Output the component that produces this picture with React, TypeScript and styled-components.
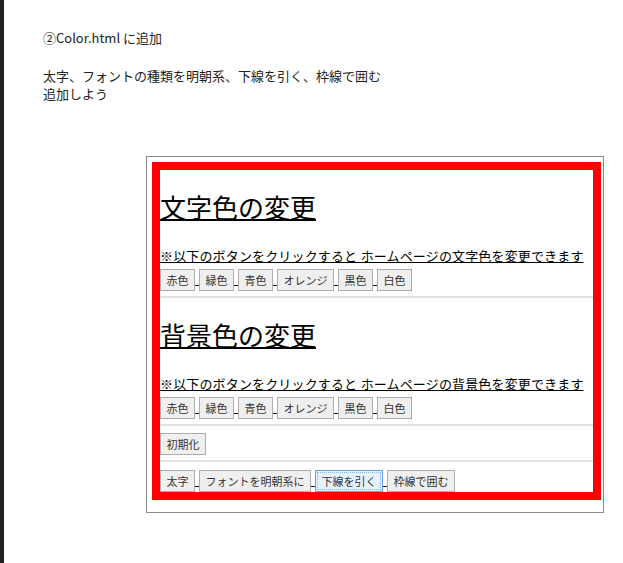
import React from "react";
import styled, { createGlobalStyle } from "styled-components";

const GlobalStyle = createGlobalStyle`
  html, body {
    margin: 0;
    padding: 0;
    background: #fff;
  }
  body {
    font-family: "Noto Sans CJK JP", "Noto Sans", sans-serif;
    color: #222;
  }
`;

const Page = styled.div`
  display: flex;
  min-height: 563px;
`;

const Strip = styled.div`
  width: 4px;
  flex: none;
  background: #222;
`;

const Main = styled.div`
  flex: 1;
  display: flex;
  flex-direction: column;
`;

const Notes = styled.div`
  padding: 29px 0 0 39px;
  font-size: 13px;
  line-height: 18px;
  color: #222;
`;

const Note = styled.p<{ gap?: number }>`
  margin: ${(p) => p.gap ?? 0}px 0 0;
`;

const Frame = styled.div`
  margin: 53px 0 0 142px;
  width: 449px;
  border: 1px solid #8a8a8a;
  padding: 5px 2px 12px 5px;
`;

const RedBox = styled.div`
  border: 8px solid #ff0000;
  display: flex;
  flex-direction: column;
`;

const Block = styled.div<{ pt?: number; pb?: number; last?: boolean }>`
  padding: ${(p) => p.pt ?? 0}px 0 ${(p) => p.pb ?? 5}px;
  border-bottom: ${(p) => (p.last ? "none" : "2px solid #e2e2e2")};
`;

const Title = styled.h1`
  margin: 24px 0 0;
  font-size: 26px;
  line-height: 32px;
  font-weight: 400;
  color: #000;
  text-decoration: underline;
  text-decoration-thickness: 2px;
  font-family: "Liberation Serif", "Noto Sans CJK JP", serif;
`;

const Lead = styled.p`
  margin: 22px 0 0;
  font-size: 13px;
  line-height: 17px;
  letter-spacing: 0.15px;
  color: #000;
  text-decoration: underline;
  white-space: nowrap;
  font-family: "Liberation Serif", "Noto Sans CJK JP", serif;
`;

const Row = styled.div<{ mt?: number }>`
  display: flex;
  align-items: flex-end;
  margin-top: ${(p) => p.mt ?? 0}px;
`;

const Sep = styled.span`
  width: 4px;
  height: 1px;
  background: #111;
  margin-bottom: 5px;
`;

const Btn = styled.button<{ focused?: boolean }>`
  font-family: "Noto Sans CJK JP", sans-serif;
  font-size: 11px;
  line-height: 14px;
  height: 22px;
  padding: 3px 5.5px;
  margin: 0;
  color: #333;
  background: ${(p) => (p.focused ? "#e5f1fb" : "#efefef")};
  border: 1px solid ${(p) => (p.focused ? "#5da2e0" : "#adadad")};
  border-radius: 0;
  outline: ${(p) => (p.focused ? "1px dotted #8ab8e6" : "none")};
  outline-offset: -3px;
  white-space: nowrap;
`;

const ButtonRow: React.FC<{ labels: string[]; focused?: string; mt?: number }> = ({ labels, focused, mt }) => (
  <Row mt={mt}>
    {labels.map((l, i) => (
      <React.Fragment key={l}>
        {i > 0 && <Sep />}
        <Btn focused={l === focused}>{l}</Btn>
      </React.Fragment>
    ))}
  </Row>
);

const colors = ["赤色", "緑色", "青色", "オレンジ", "黒色", "白色"];

export default function App() {
  return (
    <>
      <GlobalStyle />
      <Page>
        <Strip />
        <Main>
          <Notes>
            <Note>②Color.html に追加</Note>
            <Note gap={20}>太字、フォントの種類を明朝系、下線を引く、枠線で囲む</Note>
            <Note>追加しよう</Note>
          </Notes>
          <Frame>
            <RedBox>
              <Block>
                <Title>文字色の変更</Title>
                <Lead>※以下のボタンをクリックすると ホームページの文字色を変更できます</Lead>
                <ButtonRow labels={colors} mt={4} />
              </Block>
              <Block>
                <Title>背景色の変更</Title>
                <Lead>※以下のボタンをクリックすると ホームページの背景色を変更できます</Lead>
                <ButtonRow labels={colors} mt={4} />
              </Block>
              <Block pt={7} pb={5}>
                <ButtonRow labels={["初期化"]} />
              </Block>
              <Block pt={8} pb={0} last>
                <ButtonRow labels={["太字", "フォントを明朝系に", "下線を引く", "枠線で囲む"]} focused="下線を引く" />
              </Block>
            </RedBox>
          </Frame>
        </Main>
      </Page>
    </>
  );
}
